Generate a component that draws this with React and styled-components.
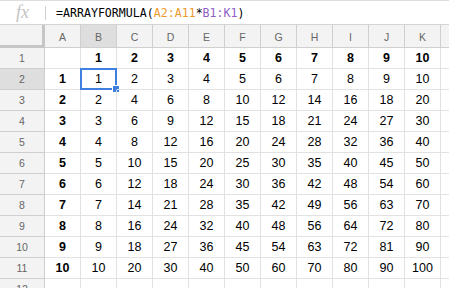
import React from 'react';
import styled, { createGlobalStyle } from 'styled-components';

const GlobalStyle = createGlobalStyle`
  body {
    margin: 0;
    background: #fff;
    font-family: "Liberation Sans", Arial, sans-serif;
    overflow: hidden;
  }
`;

// last column only peeks in at the right edge, its letter is off screen
const COLS = ['A', 'B', 'C', 'D', 'E', 'F', 'G', 'H', 'I', 'J', 'K', ''];
const ROWS = 12;

function cellValue(row, col) {
  // col 0 = A, row 1 = header numbers
  if (row === 1) return col >= 1 && col <= 10 ? col : '';
  if (row >= 2 && row <= 11) {
    const n = row - 1;
    if (col === 0) return n;
    if (col <= 10) return n * col;
  }
  return '';
}

function App() {
  return (
    <Page>
      <GlobalStyle />
      <FormulaBar>
        <Fx>fx</Fx>
        <Divider />
        <Formula>
          =ARRAYFORMULA(<Range $color="#eb9b2c">A2:A11</Range>*<Range $color="#8e60c6">B1:K1</Range>)
        </Formula>
      </FormulaBar>

      <Grid>
        <Corner />
        {COLS.map((c, i) => (
          <ColHeader key={i} $active={c === 'B'}>{c}</ColHeader>
        ))}

        {Array.from({ length: ROWS }, (_, i) => {
          const row = i + 1;
          return (
            <React.Fragment key={row}>
              <RowHeader $active={row === 2}>{row}</RowHeader>
              {COLS.map((c, col) => (
                <Cell key={col} $bold={row === 1 || col === 0}>
                  {cellValue(row, col)}
                  {row === 2 && col === 1 && (
                    <Selection>
                      <Handle />
                    </Selection>
                  )}
                </Cell>
              ))}
            </React.Fragment>
          );
        })}
      </Grid>
    </Page>
  );
}

const Page = styled.div`
  width: 449px;
  height: 288px;
  overflow: hidden;
`;

const FormulaBar = styled.div`
  display: flex;
  align-items: center;
  height: 25px;
  box-sizing: border-box;
  border-top: 1px solid #dedede;
  border-bottom: 1px solid #d4d4d4;
`;

const Fx = styled.div`
  width: 45px;
  text-align: center;
  font-family: "Liberation Serif", serif;
  font-style: italic;
  font-size: 18px;
  color: #c4c4c4;
  line-height: 1;
  margin-top: -2px;
`;

const Divider = styled.div`
  width: 1px;
  height: 14px;
  background: #d0d0d0;
`;

const Formula = styled.div`
  margin-left: 10px;
  font-family: "DejaVu Sans Mono", "Liberation Mono", monospace;
  font-size: 11.6px;
  color: #000;
  white-space: nowrap;
`;

const Range = styled.span`
  color: ${(p) => p.$color};
`;

const Grid = styled.div`
  display: grid;
  grid-template-columns: 45px repeat(12, 36px);
  grid-template-rows: 23px;
  grid-auto-rows: 21px;
`;

const HeaderBase = styled.div`
  display: flex;
  align-items: center;
  justify-content: center;
  box-sizing: border-box;
  border-right: 1px solid #cfcfcf;
  border-bottom: 1px solid #cfcfcf;
  font-size: 10.5px;
  color: #666;
`;

const Corner = styled(HeaderBase)`
  background: #f3f3f3;
  border-right: 3px solid #c6c6c6;
  border-bottom: 3px solid #c6c6c6;
`;

const ColHeader = styled(HeaderBase)`
  background: ${(p) => (p.$active ? '#dedede' : '#f3f3f3')};
  padding-top: 1px;
`;

const RowHeader = styled(HeaderBase)`
  background: ${(p) => (p.$active ? '#dedede' : '#f3f3f3')};
`;

const Cell = styled.div`
  position: relative;
  display: flex;
  align-items: center;
  justify-content: center;
  box-sizing: border-box;
  border-right: 1px solid #e2e2e2;
  border-bottom: 1px solid #e2e2e2;
  font-size: 12.5px;
  font-weight: ${(p) => (p.$bold ? 700 : 400)};
  color: #000;
`;

const Selection = styled.div`
  position: absolute;
  top: -1px;
  left: -1px;
  right: -1px;
  bottom: -1px;
  border: 2px solid #3f7fe0;
  pointer-events: none;
`;

const Handle = styled.div`
  position: absolute;
  right: -5px;
  bottom: -5px;
  width: 6px;
  height: 6px;
  background: #3f7fe0;
  border: 1px solid #fff;
`;

export default App;
